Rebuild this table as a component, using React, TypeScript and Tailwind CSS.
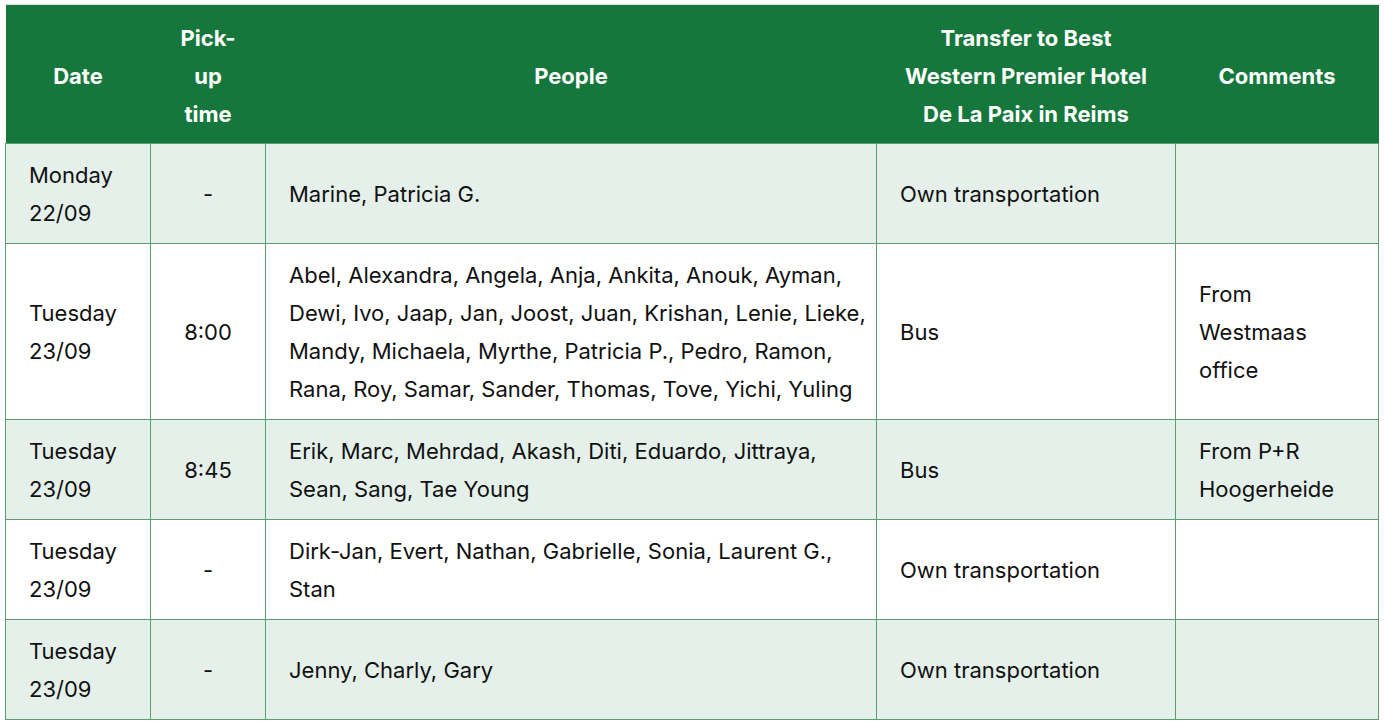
const rows = [
  { date: ['Monday', '22/09'], time: '-', people: 'Marine, Patricia G.', transfer: 'Own transportation', comments: '', shade: true },
  {
    date: ['Tuesday', '23/09'],
    time: '8:00',
    people:
      'Abel, Alexandra, Angela, Anja, Ankita, Anouk, Ayman, Dewi, Ivo, Jaap, Jan, Joost, Juan, Krishan, Lenie, Lieke, Mandy, Michaela, Myrthe, Patricia P., Pedro, Ramon, Rana, Roy, Samar, Sander, Thomas, Tove, Yichi, Yuling',
    transfer: 'Bus',
    comments: 'From Westmaas office',
    shade: false,
  },
  { date: ['Tuesday', '23/09'], time: '8:45', people: 'Erik, Marc, Mehrdad, Akash, Diti, Eduardo, Jittraya, Sean, Sang, Tae Young', transfer: 'Bus', comments: 'From P+R Hoogerheide', shade: true },
  { date: ['Tuesday', '23/09'], time: '-', people: 'Dirk-Jan, Evert, Nathan, Gabrielle, Sonia, Laurent G., Stan', transfer: 'Own transportation', comments: '', shade: false },
  { date: ['Tuesday', '23/09'], time: '-', people: 'Jenny, Charly, Gary', transfer: 'Own transportation', comments: '', shade: true },
];

export default function App() {
  return (
    <div className="min-h-screen bg-white pl-[5px] pt-[4px] font-['Inter',sans-serif]">
      <div className="w-[1374px] border-t border-[#dfe3e1]">
        <table className="w-full table-fixed border-collapse text-[22px] leading-[38px] text-[#111]">
          <colgroup>
            <col className="w-[145px]" />
            <col className="w-[115px]" />
            <col className="w-[611px]" />
            <col className="w-[299px]" />
            <col />
          </colgroup>
          <thead>
            <tr className="bg-[#15773b] text-white font-bold">
              <th className="px-[23px] pt-[14px] pb-[10px] text-center align-middle">Date</th>
              <th className="px-[23px] pt-[14px] pb-[10px] text-center align-middle">Pick-up time</th>
              <th className="px-[23px] pt-[14px] pb-[10px] text-center align-middle">People</th>
              <th className="px-[20px] pt-[14px] pb-[10px] text-center align-middle">Transfer to Best Western Premier Hotel De La Paix in Reims</th>
              <th className="px-[23px] pt-[14px] pb-[10px] text-center align-middle">Comments</th>
            </tr>
          </thead>
          <tbody>
            {rows.map((r, i) => (
              <tr key={i} className={r.shade ? 'bg-[#e5f0ea]' : 'bg-white'}>
                <td className="border border-[#5c9d76] px-[23px] pt-[12px] pb-[11px] align-middle">
                  {r.date[0]}
                  <br />
                  {r.date[1]}
                </td>
                <td className="border border-[#5c9d76] px-[23px] pt-[12px] pb-[11px] text-center align-middle">{r.time}</td>
                <td className="border border-[#5c9d76] pl-[23px] pr-[10px] pt-[12px] pb-[11px] align-middle">{r.people}</td>
                <td className="border border-[#5c9d76] px-[23px] pt-[12px] pb-[11px] align-middle">{r.transfer}</td>
                <td className="border border-[#5c9d76] px-[23px] pt-[12px] pb-[11px] align-middle">{r.comments}</td>
              </tr>
            ))}
          </tbody>
        </table>
      </div>
    </div>
  );
}
